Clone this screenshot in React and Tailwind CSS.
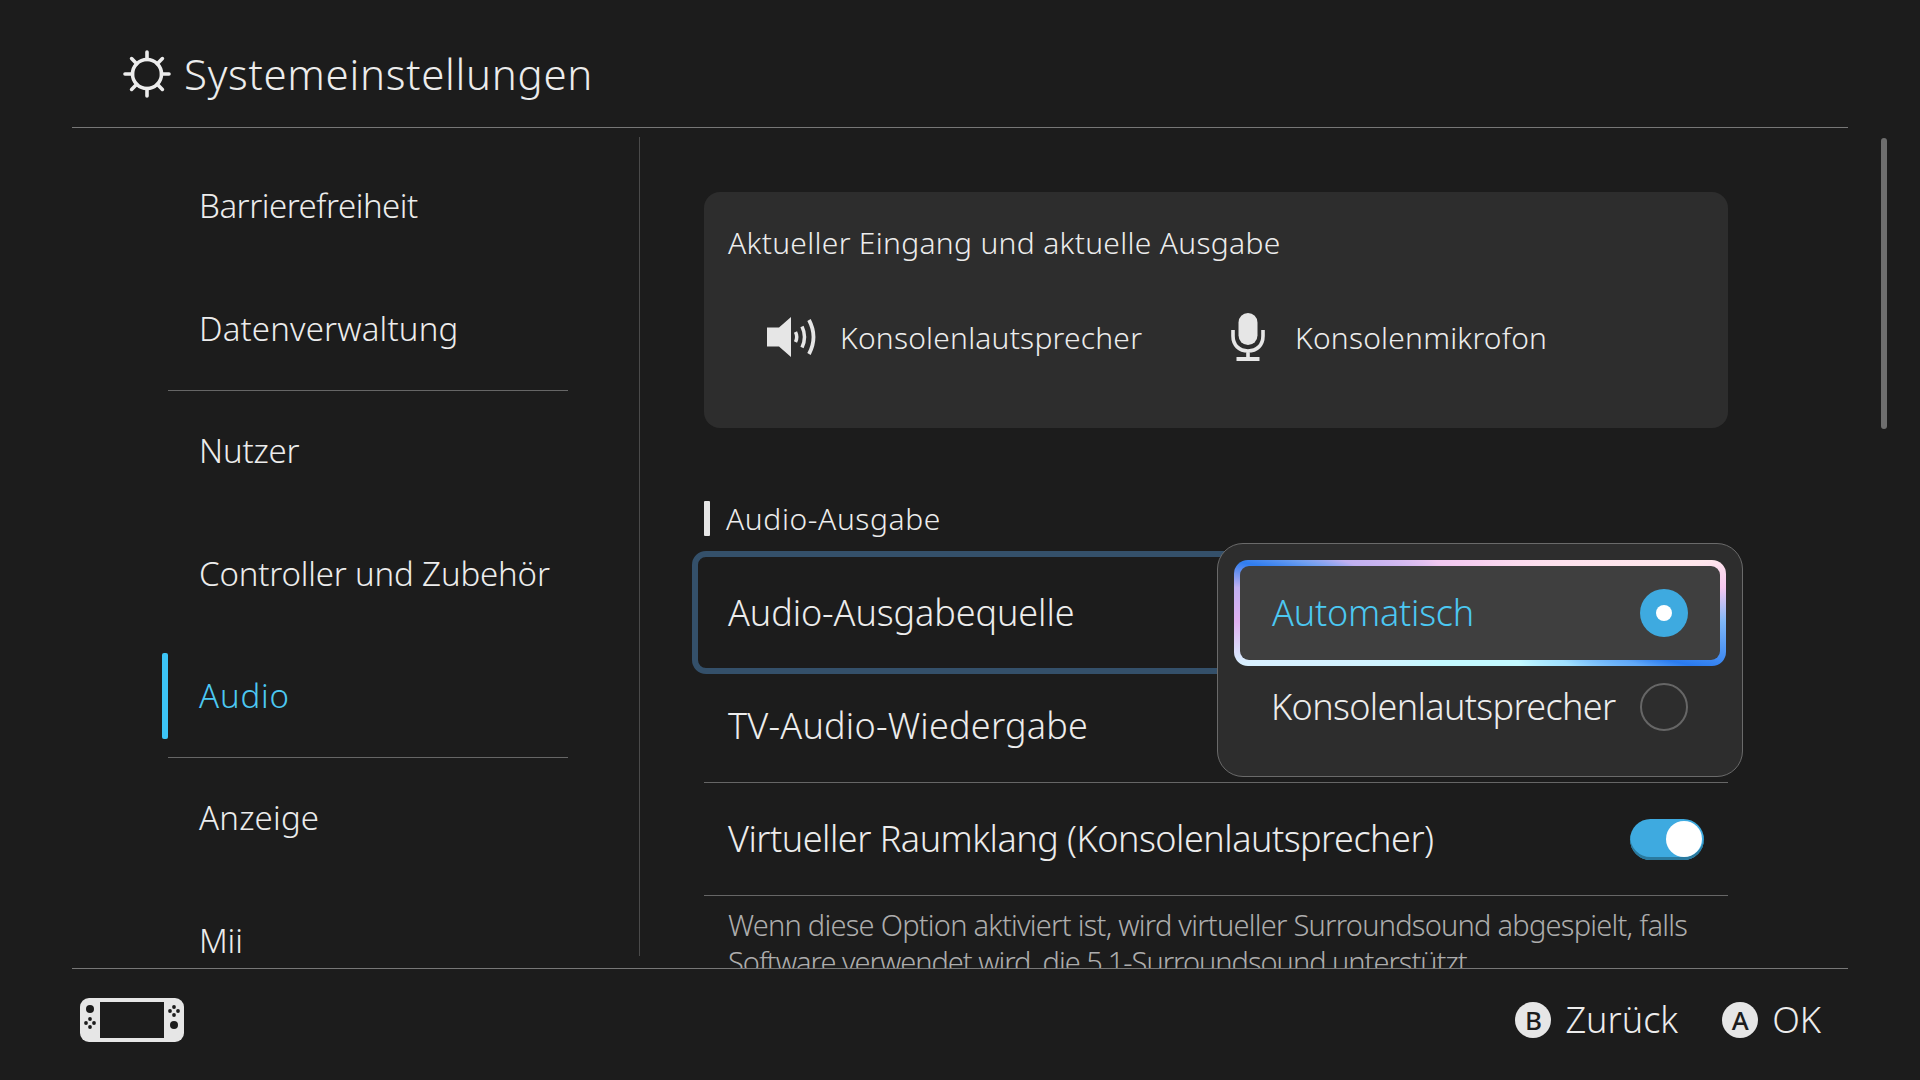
const sans = { fontFamily: '"Noto Sans", sans-serif' };

const sideItems = [
  { name: 'Barrierefreiheit', track: 'tracking-[-0.014em]' },
  { name: 'Datenverwaltung', track: 'tracking-[0.005em]', line: true },
  { name: 'Nutzer', track: 'tracking-[-0.005em]' },
  { name: 'Controller und Zubehör', track: 'tracking-[-0.005em]' },
  { name: 'Audio', track: 'tracking-[0.025em]', active: true, line: true },
  { name: 'Anzeige', track: 'tracking-[0.006em]' },
  { name: 'Mii', track: 'tracking-[-0.005em]' },
];

function GearIcon() {
  return (
    <svg width="48" height="48" viewBox="0 0 48 48" fill="none" stroke="#ececec" strokeWidth="3.6" strokeLinecap="round">
      <circle cx="24" cy="24" r="14.5" />
      <path d="M24 9.500V2M24 46v-7.500M9.500 24H2M46 24h-7.500M13.700 13.700 8.600 8.600M39.400 39.400l-5.100-5.100M34.300 13.700l5.100-5.100M8.600 39.400l5.100-5.100" />
    </svg>
  );
}

function SpeakerIcon() {
  return (
    <svg width="52" height="40" viewBox="0 0 52 40" fill="none">
      <path d="M0 10.500h12L24 0v40L12 29.500H0z" fill="#e6e6e6" />
      <path d="M28.500 15q2.500 5 0 10" stroke="#e6e6e6" strokeWidth="3.500" />
      <path d="M35 9.500q5 10.500 0 21" stroke="#e6e6e6" strokeWidth="3.500" />
      <path d="M42 3q9 17 0 34" stroke="#e6e6e6" strokeWidth="3.800" />
    </svg>
  );
}

function MicIcon() {
  return (
    <svg width="34" height="48" viewBox="0 0 34 48" fill="none">
      <rect x="7.500" y="0" width="19" height="32" rx="9.500" fill="#e6e6e6" />
      <path d="M2 17v6c0 9 6 15 15 15s15-6 15-15v-6M17 38v7" stroke="#e6e6e6" strokeWidth="3.600" />
      <rect x="5.500" y="44" width="23" height="4" fill="#e6e6e6" />
    </svg>
  );
}

function ConsoleIcon() {
  return (
    <svg width="104" height="44" viewBox="0 0 104 44">
      <rect width="104" height="44" rx="9" fill="#e6e6e6" />
      <rect x="20" y="4" width="64" height="36" fill="#1c1c1c" />
      <g fill="#1c1c1c">
        <circle cx="10" cy="11" r="4" />
        <circle cx="94" cy="27" r="4" />
        <circle cx="10" cy="21" r="1.900" />
        <circle cx="10" cy="29" r="1.900" />
        <circle cx="6" cy="25" r="1.900" />
        <circle cx="14" cy="25" r="1.900" />
        <circle cx="94" cy="9" r="1.900" />
        <circle cx="94" cy="17" r="1.900" />
        <circle cx="90" cy="13" r="1.900" />
        <circle cx="98" cy="13" r="1.900" />
      </g>
    </svg>
  );
}

function FootButton({ letter, label }) {
  return (
    <div className="flex items-center gap-[14px]">
      <span className="w-[36px] h-[36px] rounded-full bg-[#e6e6e6] text-[#1c1c1c] text-[26px] font-medium flex items-center justify-center leading-none">
        {letter}
      </span>
      <span className="text-[36px] text-[#ececec] leading-none">{label}</span>
    </div>
  );
}

function SideItem({ name, track, active, line }) {
  return (
    <div className="relative h-[122.4px] w-[400px] flex items-center pl-[31px]">
      {active && <div className="absolute left-[-6px] top-[18px] h-[86px] w-[6px] rounded-[2px] bg-[#3cc4f5]" />}
      <span className={`text-[33px] ${track} ${active ? 'text-[#4cc8f2]' : 'text-[#ececec]'}`}>{name}</span>
      {line && <div className="absolute left-0 right-0 bottom-[-1px] h-px bg-[#666666]" />}
    </div>
  );
}

export default function App() {
  return (
    <div style={sans} className="relative w-[1920px] h-[1080px] bg-[#1c1c1c] flex flex-col overflow-hidden font-light">
      {/* barra titolo */}
      <header className="h-[128px] mx-[72px] border-b border-[#777777] flex items-center pl-[51px] pt-[20px] gap-[13px] shrink-0">
        <GearIcon />
        <h1 className="text-[42px] text-[#ececec] font-light tracking-[0.017em]">Systemeinstellungen</h1>
      </header>

      <div className="flex flex-1 min-h-0">
        {/* menu a sinistra */}
        <nav className="w-[640px] shrink-0 pl-[168px] pt-[17px] overflow-hidden relative">
          {sideItems.map(it => <SideItem key={it.name} {...it} />)}
          <div className="absolute right-0 top-[9px] bottom-[12px] w-px bg-[#4a4a4a]" />
        </nav>

        {/* contenuto */}
        <main className="flex-1 pl-[64px] pt-[64px] overflow-hidden relative">
          <div className="w-[1024px]">
            <section className="h-[236px] bg-[#2d2d2d] rounded-[16px] px-[24px] pt-[30px]">
              <p className="text-[30px] text-[#ececec] leading-[42px] tracking-[0.01em]">Aktueller Eingang und aktuelle Ausgabe</p>
              <div className="flex items-center mt-[45px] pl-[39px] h-[56px]">
                <SpeakerIcon />
                <span className="ml-[21px] w-[391px] text-[30px] text-[#ececec] tracking-[0.007em]">Konsolenlautsprecher</span>
                <MicIcon />
                <span className="ml-[30px] text-[30px] text-[#ececec] tracking-[0.007em]">Konsolenmikrofon</span>
              </div>
            </section>

            <div className="mt-[73px] flex items-center h-[35px] gap-[16px]">
              <div className="w-[6px] h-[35px] bg-[#e6e6e6] rounded-[1px]" />
              <span className="text-[30px] text-[#ececec] tracking-[0.02em]">Audio-Ausgabe</span>
            </div>

            <div className="relative mt-[15px] -mx-[12px] h-[123px] border-[6px] border-[#34506a] rounded-[14px] flex items-center pl-[30px]">
              <span className="text-[36px] text-[#ececec] tracking-[-0.0025em]">Audio-Ausgabequelle</span>
            </div>
            <div className="h-[109px] border-b border-[#666666] flex items-center pl-[24px] pb-[5px]">
              <span className="text-[36px] text-[#ececec] tracking-[0.006em]">TV-Audio-Wiedergabe</span>
            </div>
            <div className="h-[113px] border-b border-[#666666] flex items-center justify-between px-[24px]">
              <span className="text-[36px] text-[#ececec] tracking-[-0.014em]">Virtueller Raumklang (Konsolenlautsprecher)</span>
              <div className="relative w-[74px] h-[41px] rounded-full bg-[#3eaae0] shadow-[inset_0_-3px_0_#2a7a9f]">
                <div className="absolute right-[2px] top-[2px] w-[36px] h-[36px] rounded-full bg-white" />
              </div>
            </div>
            <p className="px-[24px] pt-[10px] text-[29px] leading-[37px] text-[#adadad] whitespace-nowrap tracking-[-0.026em]">
              Wenn diese Option aktiviert ist, wird virtueller Surroundsound abgespielt, falls<br />
              <span className="tracking-[-0.035em]">Software verwendet wird, die 5.1-Surroundsound unterstützt.</span>
            </p>
          </div>
        </main>
      </div>

      <footer className="h-[112px] mx-[72px] border-t border-[#777777] flex items-center justify-between pl-[8px] pr-[27px] pb-[10px] shrink-0 bg-[#1c1c1c] relative">
        <ConsoleIcon />
        <div className="flex items-center gap-[44px]">
          <FootButton letter="B" label="Zurück" />
          <FootButton letter="A" label="OK" />
        </div>
      </footer>

      {/* barra di scorrimento */}
      <div className="absolute left-[1881px] top-[138px] w-[6px] h-[291px] rounded-full bg-[#6e6e6e]" />

      {/* menu a tendina sopra la riga */}
      <div className="absolute left-[1217px] top-[543px] w-[526px] h-[234px] bg-[#2d2d2d] border border-[#6a6a6a] rounded-[26px] px-[16px] pt-[16px]">
        <div className="h-[106px] rounded-[14px] p-[6px] bg-[conic-gradient(#f7d0f0_0deg,#ffe6ec_77deg,#f7c8f0_84deg,#80b8f8_92deg,#2a7bf0_104deg,#60a8f8_108deg,#a0e0ff_120deg,#c4f9ff_142deg,#c4f9ff_220deg,#d8f0ff_258deg,#e0b0f0_268deg,#c0b0f0_276deg,#2f7df0_282deg,#6f9ff0_286deg,#c0b0f0_291deg,#f0c8f0_320deg,#f7d0f0_360deg)]">
          <div className="h-full rounded-[9px] bg-[#3f3f3f] flex items-center justify-between pl-[32px] pr-[32px]">
            <span className="text-[36px] text-[#4cc8f2] tracking-[-0.006em]">Automatisch</span>
            <div className="w-[48px] h-[48px] rounded-full bg-[#3eaae0] flex items-center justify-center shrink-0">
              <div className="w-[16px] h-[16px] rounded-full bg-white" />
            </div>
          </div>
        </div>
        <div className="h-[82px] flex items-center justify-between pl-[37px] pr-[38px]">
          <span className="text-[36px] text-[#ececec] tracking-[-0.018em]">Konsolenlautsprecher</span>
          <div className="w-[48px] h-[48px] rounded-full border-2 border-[#666666] shrink-0" />
        </div>
      </div>
    </div>
  );
}
